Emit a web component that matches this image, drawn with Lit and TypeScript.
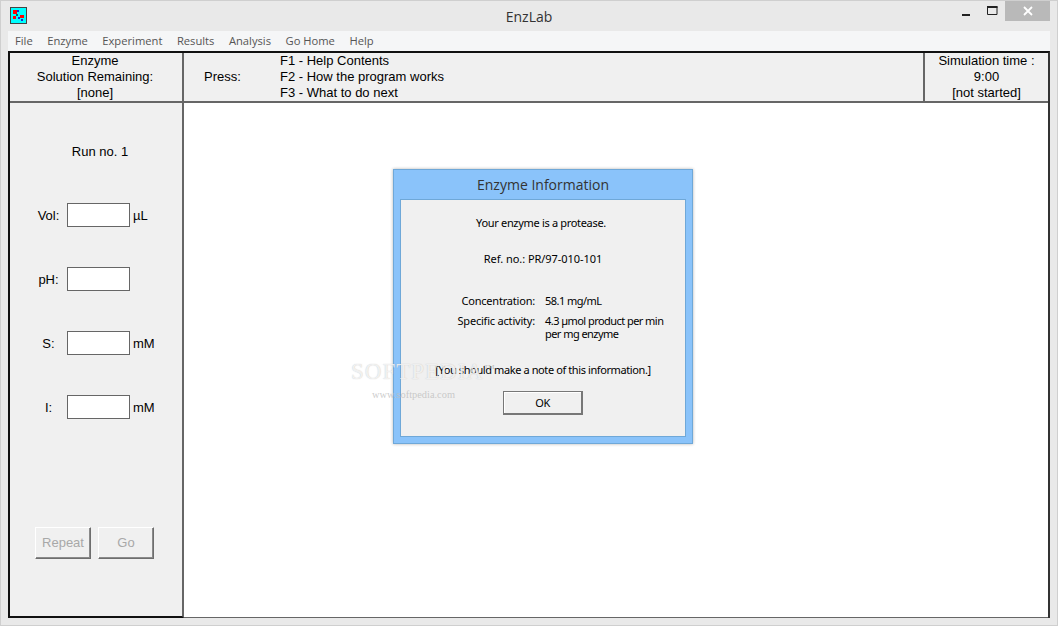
import { LitElement, html, css, svg } from "lit";
import { customElement } from "lit/decorators.js";

@customElement("app-root")
export class AppRoot extends LitElement {
  static styles = css`
    :host { display: block; width: 1058px; height: 626px; overflow: hidden; }
    * { box-sizing: border-box; }
    .window {
      width: 1058px; height: 626px; background: #e9e9e9; border: 1px solid #cfcfcf;
      display: flex; flex-direction: column; position: relative;
      font-family: "Liberation Sans", Arial, sans-serif; color: #000;
    }
    .titlebar { height: 30px; flex: none; display: grid; grid-template-columns: 1fr auto; position: relative; }
    .appicon { position: absolute; left: 9px; top: 6px; width: 17px; height: 17px; }
    .title { position: absolute; left: 0; right: 0; top: 7px; text-align: center; font: 14px/18px "Open Sans", sans-serif; color: #333; }
    .controls { grid-column: 2; display: flex; align-items: flex-start; height: 21px; margin-right: 7px; position: relative; }
    .ctl { width: 26px; height: 20px; display: flex; align-items: center; justify-content: center; }
    .ctl.close { width: 45px; height: 20px; background: #b9b9b9; }
    .menu {
      height: 20px; flex: none; margin: 0 7px; background: #f5f6f7; display: flex; gap: 14.5px; padding-left: 7px;
      font: 11.2px/20px "Open Sans", sans-serif; color: #555; align-items: center;
    }
    .frame {
      flex: 1; margin: 0 7px 7px 7px; display: grid;
      grid-template-columns: 174px 741px 1fr; grid-template-rows: 50px 1fr;
      border-top: 2px solid #111; border-left: 2px solid #111; border-right: 2px solid #333; background: #fff;
      font-size: 13px; line-height: 16px;
    }
    .cell { background: #f0f0f0; border-bottom: 2px solid #666; }
    .cell.sep { border-right: 2px solid #666; }
    .enz { text-align: center; padding-right: 2px; }
    .press { display: grid; grid-template-columns: 76px 1fr; padding-left: 20px; }
    .press .lbl { align-self: center; }
    .sim { text-align: center; }
    .left {
      background: #f0f0f0; border-right: 2px solid #666; border-bottom: 2px solid #111;
      display: flex; flex-direction: column; position: relative; padding-top: 41px;
    }
    .run { text-align: center; padding-left: 8px; height: 16px; margin-bottom: 43px; }
    .field { display: grid; grid-template-columns: 50px 63px auto; align-items: center; height: 24px; margin-bottom: 40px; padding-left: 7px; }
    .field .l { text-align: center; padding-left: 13px; padding-top: 1px; }
    .input { width: 63px; height: 24px; background: #fff; border: 1px solid #666; }
    .u { padding-left: 3px; padding-top: 1px; }
    .btns { display: flex; gap: 7px; margin-top: 68px; padding-left: 25px; }
    .btn {
      width: 56px; height: 32px; background: #f0f0f0; color: #a8a8a8; display: flex; align-items: center; justify-content: center;
      border: 1px solid; border-color: #fff #6e6e6e #6e6e6e #fff; box-shadow: inset -1px -1px 0 #8a8a8a;
    }
    .main { background: #fff; position: relative; border-bottom: 1px solid #666; grid-column: 2 / 4; }
    .dialog {
      position: absolute; left: 209px; top: 66px; width: 300px; height: 275px; background: #8ac3fa;
      border: 1px solid #6fa8d8; box-shadow: 0 0 3px rgba(0,0,0,.3);
      display: flex; flex-direction: column; padding: 0 6px 6px 6px;
    }
    .dtitle { height: 29px; flex: none; text-align: center; font: 14px/29px "Open Sans", sans-serif; color: #333; }
    .dbody {
      flex: 1; background: #f0f0f0; border: 1px solid #6fa8d8; font: 11px/13px "Noto Sans", sans-serif; letter-spacing: -0.4px; color: #000;
      display: flex; flex-direction: column; align-items: center; position: relative; padding-top: 16px;
    }
    .msg { height: 13px; }
    .first { letter-spacing: -0.32px; padding-right: 4px; }
    .ref { margin-top: 23px; letter-spacing: -0.05px; }
    .table { margin-top: 29px; display: grid; grid-template-columns: 134px 1fr; column-gap: 10px; width: 100%; row-gap: 7px; }
    .table .k { text-align: right; letter-spacing: -0.2px; }
    .table .v { letter-spacing: -0.55px; }
    .note { margin-top: 23px; }
    .ok {
      margin-top: 15px; width: 80px; height: 24px; background: #f0f0f0; display: flex; align-items: center; justify-content: center;
      border: 1px solid #777; border-right-width: 2px; border-bottom-width: 2px; box-shadow: inset 1px 1px 0 #fff;
    }
    .wm { position: absolute; left: 350px; top: 358px; font: 23px/26px "Liberation Serif", serif; letter-spacing: 1px; color: rgba(255,255,255,.75); text-shadow: 0 0 1px rgba(150,150,150,.6); pointer-events: none; }
    .wm sup { font-size: 7px; line-height: 0; letter-spacing: 0; vertical-align: 10px; color: rgba(170,170,170,.8); text-shadow: none; }
    .wm2 { position: absolute; left: 371px; top: 387px; font: 10.4px/14px "Liberation Serif", serif; color: rgba(190,190,190,.8); pointer-events: none; }
  `;

  private icon() {
    return svg`<svg class="appicon" viewBox="0 0 17 17">
      <rect x="0.5" y="0.5" width="16" height="16" fill="#00ffff" stroke="#444"/>
      <rect x="3" y="3" width="4" height="4" fill="#f00"/><rect x="7" y="3" width="2" height="2" fill="#22c"/>
      <rect x="3" y="9" width="3" height="3" fill="#f00"/><rect x="6" y="7" width="2" height="2" fill="#066"/>
      <rect x="10" y="8" width="4" height="3" fill="#f00"/><rect x="8" y="10" width="2" height="2" fill="#22c"/>
      <rect x="11" y="12" width="2" height="2" fill="#22c"/>
    </svg>`;
  }

  render() {
    const menu = ["File", "Enzyme", "Experiment", "Results", "Analysis", "Go Home", "Help"];
    return html`<div class="window">
      <div class="titlebar">
        ${this.icon()}
        <div class="title">EnzLab</div>
        <div class="controls">
          <div class="ctl"><svg width="10" height="10" viewBox="0 0 10 10"><rect x="1" y="8" width="8" height="2" fill="#222"/></svg></div>
          <div class="ctl"><svg width="11" height="10" viewBox="0 0 11 10"><path d="M.5.5h9.5v8H.5z" fill="none" stroke="#222"/><rect x="0" y="0" width="10.5" height="2" fill="#222"/></svg></div>
          <div class="ctl close"><svg width="10" height="10" viewBox="0 0 10 10"><path d="M1 1l8 8M9 1l-8 8" stroke="#fff" stroke-width="1.8" fill="none"/></svg></div>
        </div>
      </div>
      <div class="menu">${menu.map((m) => html`<span>${m}</span>`)}</div>
      <div class="frame">
        <div class="cell sep enz">Enzyme<br />Solution Remaining:<br />[none]</div>
        <div class="cell sep press">
          <span class="lbl">Press:</span>
          <span>F1 - Help Contents<br />F2 - How the program works<br />F3 - What to do next</span>
        </div>
        <div class="cell sim">Simulation time :<br />9:00<br />[not started]</div>
        <div class="left">
          <div class="run">Run no. 1</div>
          <div class="field"><span class="l">Vol:</span><div class="input"></div><span class="u">µL</span></div>
          <div class="field"><span class="l">pH:</span><div class="input"></div></div>
          <div class="field"><span class="l">S:</span><div class="input"></div><span class="u">mM</span></div>
          <div class="field"><span class="l">I:</span><div class="input"></div><span class="u">mM</span></div>
          <div class="btns"><div class="btn">Repeat</div><div class="btn">Go</div></div>
        </div>
        <div class="main">
          <div class="dialog">
            <div class="dtitle">Enzyme Information</div>
            <div class="dbody">
              <div class="msg first">Your enzyme is a protease.</div>
              <div class="msg ref">Ref. no.: PR/97-010-101</div>
              <div class="table">
                <span class="k">Concentration:</span><span class="v">58.1 mg/mL</span>
                <span class="k">Specific activity:</span><span class="v">4.3 µmol product per min<br />per mg enzyme</span>
              </div>
              <div class="msg note">[You should make a note of this information.]</div>
              <div class="ok">OK</div>
            </div>
          </div>
        </div>
      </div>
      <div class="wm">SOFTPEDIA<sup>TM</sup></div>
      <div class="wm2">www.softpedia.com</div>
    </div>`;
  }
}
